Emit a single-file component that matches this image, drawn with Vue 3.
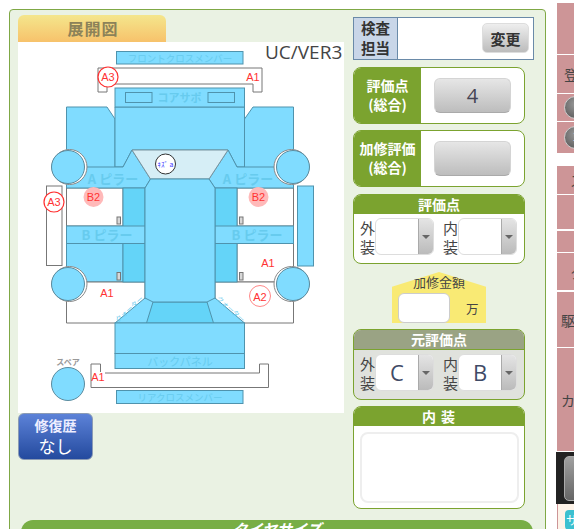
<script setup>
const pink = [
  { h: 51, cls: '', t: '' },
  { h: 38, cls: 'mid', t: '登録' },
  { h: 27, cls: 'radio', t: '' },
  { h: 31, cls: 'radio', t: '車' },
  { h: 28, cls: 'far gap', t: 'ス' },
  { h: 34, cls: '', t: '' },
  { h: 21, cls: 'gap2', t: '' },
  { h: 37, cls: 'far', t: 'ク' },
  { h: 55, cls: 'near gap2', t: '駆動' },
  { h: 103, cls: 'near', t: 'カラー' }
]
const outerInner = [
  { a: '外', b: '装' },
  { a: '内', b: '装' }
]
const original = ['C', 'B']
</script>

<template>
  <div class="page">
    <section class="panel">
      <div class="main">
        <div class="left">
          <div class="tab">展開図</div>
          <div class="sheet">
            <svg class="diagram" width="326" height="371" viewBox="18 42 326 371">
              <!-- front cross member and bumper -->
              <rect class="part" x="116.5" y="51.5" width="126.5" height="12.5" />
              <text class="ghost" x="180" y="61.5" text-anchor="middle" font-size="9.5">フロントクロスメンバー</text>
              <path class="bumper" d="M98 68H262V92H253V84H107V92H98Z" />

              <!-- fenders and hood -->
              <path class="part" d="M66.5 107H107L115 119V170H66.5Z" />
              <path class="part" d="M293.5 107H253L244.5 119V170H293.5Z" />
              <path class="part" d="M115 107H244.5V167H237L228 150H132L123 167H115Z" />
              <rect class="part" x="115" y="88" width="129.5" height="19" />
              <rect class="part" x="125.5" y="92.5" width="26.5" height="10" />
              <rect class="part" x="208" y="92.5" width="26.5" height="10" />
              <text class="ghost" x="179.5" y="102" text-anchor="middle" font-size="11" font-weight="700">コアサポ</text>

              <!-- door openings -->
              <rect class="open" x="66.5" y="188" width="56.5" height="38" />
              <rect class="open" x="237" y="188" width="56.5" height="38" />
              <rect class="part" x="66.5" y="243" width="56.5" height="39" />
              <rect class="open" x="237" y="243" width="56.5" height="39" />

              <!-- rear white frame -->
              <path class="open" d="M66.5 282H145V323H66.5Z" />
              <path class="open" d="M293.5 282H215V323H293.5Z" />

              <!-- side sills -->
              <rect class="open" x="46.5" y="186" width="15.5" height="79.5" />
              <rect class="part" x="297.5" y="186" width="16" height="80" />

              <!-- a pillars -->
              <path class="part" d="M66.5 167H123L132 150L150.5 179L145 188H66.5Z" />
              <path class="part" d="M293.5 167H237L228 150L209 179L215 188H293.5Z" />
              <text class="ghost" x="113" y="184" text-anchor="middle" font-size="13" font-weight="700">A ピラー</text>
              <text class="ghost" x="248" y="184" text-anchor="middle" font-size="13" font-weight="700">A ピラー</text>
              <path class="glass" d="M132 150H228L209 179H150.5Z" />

              <!-- body -->
              <rect class="dark" x="123" y="188" width="22" height="94" />
              <rect class="dark" x="215" y="188" width="22" height="94" />
              <rect class="part" x="66.5" y="226" width="78.5" height="17.5" />
              <rect class="part" x="215" y="226" width="78.5" height="17.5" />
              <text class="ghost" x="107" y="240" text-anchor="middle" font-size="13" font-weight="700">B ピラー</text>
              <text class="ghost" x="257" y="240" text-anchor="middle" font-size="13" font-weight="700">B ピラー</text>
              <rect class="mark" x="117" y="217" width="3.5" height="7" />
              <rect class="mark" x="117" y="272.5" width="3.5" height="7.5" />
              <rect class="mark" x="239.5" y="217" width="3.5" height="7" />
              <rect class="mark" x="239.5" y="272.5" width="3.5" height="7.5" />

              <!-- rear section -->
              <path class="part" d="M145 298L115 323H244.5L215 298Z" />
              <path class="dark" d="M153 302L146.5 323H213.5L207 302Z" />
              <text class="ghost" font-size="7" text-anchor="middle" transform="translate(131 311) rotate(-42)">クォーター</text>
              <text class="ghost" font-size="7" text-anchor="middle" transform="translate(229 311) rotate(42)">クォーター</text>
              <path class="part" d="M150.5 179H209L215 188V298L207 302H153L145 298V188Z" />
              <rect class="part" x="115" y="323" width="129.5" height="30.5" />
              <rect class="part" x="115" y="353.5" width="129.5" height="15" />
              <text class="ghost" x="180" y="366" text-anchor="middle" font-size="11">バックパネル</text>

              <!-- rear bumper and cross member -->
              <path class="bumper" d="M91 364H100.5V373H259.5V364H268.5V387.5H91Z" />
              <rect class="part" x="116.5" y="390.5" width="126.5" height="13" />
              <text class="ghost" x="180" y="401" text-anchor="middle" font-size="9.5">リアクロスメンバー</text>

              <!-- wheels -->
              <circle class="ring" cx="69.5" cy="167" r="17.5" />
              <circle class="ring" cx="291.5" cy="167" r="17.5" />
              <circle class="ring" cx="69.5" cy="284" r="17.5" />
              <circle class="ring" cx="291.5" cy="284" r="17.5" />
              <circle class="wheel" cx="68" cy="167" r="16.5" />
              <circle class="wheel" cx="293" cy="167" r="16.5" />
              <circle class="wheel" cx="68" cy="284" r="16.5" />
              <circle class="wheel" cx="293" cy="284" r="16.5" />
              <circle class="wheel" cx="68" cy="384" r="16.5" />
              <text class="spare" x="68" y="365" text-anchor="middle" font-size="8" font-weight="700">スペア</text>

              <!-- damage marks -->
              <rect x="246" y="69" width="15" height="14" fill="#fff" />
              <rect x="92" y="372" width="13" height="14" fill="#fff" />
              <circle class="pinkdot" cx="93.5" cy="197" r="10" />
              <circle class="pinkdot" cx="258.5" cy="197" r="10" />
              <circle class="redring" cx="108" cy="77" r="10" />
              <circle class="redring" cx="54" cy="202" r="10" />
              <circle class="thinring" cx="260" cy="296" r="10.5" />
              <circle class="scratch" cx="165.5" cy="164" r="10" />
              <text class="red" x="108" y="81" text-anchor="middle">A3</text>
              <text class="red" x="253" y="81" text-anchor="middle">A1</text>
              <text class="red" x="54" y="206" text-anchor="middle">A3</text>
              <text class="red" x="93.5" y="201" text-anchor="middle">B2</text>
              <text class="red" x="258.5" y="201" text-anchor="middle">B2</text>
              <text class="red" x="268" y="267" text-anchor="middle">A1</text>
              <text class="red" x="107" y="297" text-anchor="middle">A1</text>
              <text class="red" x="260" y="301" text-anchor="middle">A2</text>
              <text class="red" x="98" y="381" text-anchor="middle">A1</text>
              <text class="blue" x="165.5" y="167" text-anchor="middle">ｷｽﾞ a</text>
              <text class="version" x="265" y="59">UC/VER3</text>
            </svg>
          </div>
          <button class="history">
            <span class="history-title">修復歴</span>
            <span class="history-value">なし</span>
          </button>
        </div>

        <div class="right">
          <div class="inspect">
            <div class="inspect-label">検査<br />担当</div>
            <div class="inspect-body"><button class="change">変更</button></div>
          </div>

          <div class="score">
            <div class="score-label">評価点<br />(総合)</div>
            <div class="score-body"><div class="score-btn">4</div></div>
          </div>
          <div class="score second">
            <div class="score-label">加修評価<br />(総合)</div>
            <div class="score-body"><div class="score-btn"></div></div>
          </div>

          <div class="group rating">
            <div class="group-head">評価点</div>
            <div class="selects">
              <div v-for="item in outerInner" :key="item.a" class="pair">
                <div class="pair-label">{{ item.a }}<br />{{ item.b }}</div>
                <div class="select">
                  <div class="select-value"></div>
                  <div class="select-arrow"><i></i></div>
                </div>
              </div>
            </div>
          </div>

          <div class="amount">
            <div class="amount-label">加修金額</div>
            <div class="amount-row">
              <div class="amount-input"></div>
              <span class="amount-unit">万</span>
            </div>
          </div>

          <div class="group origin">
            <div class="group-head">元評価点</div>
            <div class="selects">
              <div v-for="(item, i) in outerInner" :key="item.a" class="pair">
                <div class="pair-label">{{ item.a }}<br />{{ item.b }}</div>
                <div class="select">
                  <div class="select-value">{{ original[i] }}</div>
                  <div class="select-arrow"><i></i></div>
                </div>
              </div>
            </div>
          </div>

          <div class="group interior">
            <div class="group-head spaced">内 装</div>
            <div class="interior-body"><div class="memo"></div></div>
          </div>
        </div>
      </div>
      <div class="tire">タイヤサイズ</div>
    </section>

    <aside class="side">
      <div
        v-for="(row, i) in pink"
        :key="i"
        class="pink"
        :class="row.cls"
        :style="{ height: row.h + 'px' }"
      >
        <span v-if="row.cls.includes('radio')" class="dot">{{ row.t }}</span>
        <template v-else>{{ row.t }}</template>
      </div>
      <div class="black"><div class="black-btn"></div></div>
      <div class="cream"><div class="teal">サ</div></div>
    </aside>
  </div>
</template>

<style>
html, body { margin: 0; background: #fff; }
</style>

<style scoped>
.page {
  display: flex;
  width: 574px;
  height: 529px;
  overflow: hidden;
  background: #fff;
  font-family: "Noto Sans CJK JP", "Open Sans", sans-serif;
  color: #444;
}
.panel {
  box-sizing: border-box;
  flex: none;
  width: 537px;
  height: 540px;
  margin: 9px 0 0 9px;
  padding: 5px 0 0 8px;
  border: 1px solid #7fa845;
  border-radius: 4px;
  background: #eaf2e3;
}
.main { display: flex; height: 505px; }
.left { flex: none; width: 326px; }
.tab {
  box-sizing: border-box;
  width: 148px;
  height: 27px;
  padding-left: 2px;
  border-radius: 6px 6px 0 0;
  background: linear-gradient(#f4e68c, #f7c26b);
  color: #8c8259;
  font-size: 16px;
  font-weight: 700;
  line-height: 27px;
  letter-spacing: 1px;
  text-align: center;
}
.sheet { height: 371px; background: #fff; }
.diagram { display: block; font-family: "Noto Sans CJK JP", "Open Sans", sans-serif; }
.part { fill: #80dcff; stroke: #4f93ad; stroke-width: 1; }
.dark { fill: #64d4f8; stroke: #4f93ad; stroke-width: 1; }
.open { fill: #fff; stroke: #777; stroke-width: 1; }
.bumper { fill: #fff; stroke: #777; stroke-width: 1; }
.glass { fill: #d6eef6; stroke: #79949f; stroke-width: 1; }
.mark { fill: #d8d8d8; stroke: #777; stroke-width: 1; }
.ring { fill: #fff; stroke: #888; stroke-width: 1; }
.wheel { fill: #80dcff; stroke: #5b8b9e; stroke-width: 1; }
.ghost { fill: #67cbee; }
.spare { fill: #999; }
.pinkdot { fill: #ffb9b9; }
.redring { fill: #fff; stroke: #ff3030; stroke-width: 1.2; }
.thinring { fill: #fff; stroke: #ff6a6a; stroke-width: 0.8; }
.scratch { fill: #fff; stroke: #333; stroke-width: 1; }
.red { fill: #ff3333; font-size: 11px; font-family: "Liberation Sans", sans-serif; }
.blue { fill: #3a3aff; font-size: 7px; }
.version { fill: #444; font-size: 19px; font-family: "Open Sans", sans-serif; }
.history {
  display: flex;
  flex-direction: column;
  align-items: center;
  box-sizing: border-box;
  width: 75px;
  height: 47px;
  margin: 0;
  padding: 1px 0 0;
  border: 1px solid #8b9bb5;
  border-radius: 6px;
  background: linear-gradient(#5c82d8, #244a9e);
  color: #fff;
  font-family: inherit;
}
.history-title { font-size: 14px; font-weight: 700; line-height: 20px; color: #eef; }
.history-value { font-size: 17px; line-height: 22px; }
.right { flex: none; width: 181px; margin-left: 9px; padding-top: 2px; }
.inspect {
  box-sizing: border-box;
  display: flex;
  width: 181px;
  height: 43px;
  border: 1px solid #6a8aa8;
  background: #fff;
}
.inspect-label {
  box-sizing: border-box;
  width: 44px;
  border-right: 1px solid #6a8aa8;
  background: #c9d6e8;
  color: #333;
  font-size: 14.5px;
  font-weight: 700;
  line-height: 20px;
  text-align: center;
}
.inspect-body { flex: 1; display: flex; justify-content: flex-end; padding: 5px 4px 0 0; }
.change {
  box-sizing: border-box;
  width: 47px;
  height: 30px;
  padding: 0;
  border: 1px solid #ddd;
  border-radius: 5px;
  background: linear-gradient(#eee, #bcbcbc);
  color: #333;
  font-family: inherit;
  font-size: 15px;
  font-weight: 700;
}
.score {
  box-sizing: border-box;
  display: flex;
  width: 172px;
  height: 57px;
  margin-top: 7px;
  overflow: hidden;
  border: 1px solid #7ba32f;
  border-radius: 8px;
  background: #fff;
}
.score.second { margin-top: 6px; }
.score-label {
  flex: none;
  width: 67px;
  padding-top: 8px;
  box-sizing: border-box;
  background: #7ba32f;
  color: #fff;
  font-size: 14px;
  font-weight: 700;
  line-height: 19px;
  text-align: center;
  white-space: nowrap;
}
.score-body { flex: 1; padding: 10px 0 0 13px; }
.score-btn {
  box-sizing: border-box;
  width: 77px;
  height: 35px;
  border: 1px solid #d4d4d4;
  border-bottom-color: #aaa;
  border-radius: 6px;
  background: linear-gradient(#e6e6e6, #bdbdbd);
  color: #445;
  font-family: "Open Sans", sans-serif;
  font-size: 20px;
  line-height: 33px;
  text-align: center;
}
.group {
  box-sizing: border-box;
  width: 172px;
  overflow: hidden;
  border: 1px solid #7ba32f;
  border-radius: 8px;
  background: #fff;
}
.rating { height: 70px; margin-top: 7px; }
.origin { height: 71px; margin-top: 6px; background: #e0e2dd; }
.interior { height: 103px; margin-top: 6px; }
.group-head {
  height: 19px;
  background: #7ba32f;
  color: #fff;
  font-size: 14px;
  font-weight: 700;
  line-height: 18px;
  text-align: center;
}
.spaced { letter-spacing: 1px; }
.origin .group-head { background: #9aa384; border-bottom: 1px solid #7ba32f; }
.selects { display: flex; gap: 9px; padding: 4px 0 0 6px; }
.pair { display: flex; }
.pair-label { width: 15px; font-size: 15px; line-height: 19px; color: #444; }
.select {
  box-sizing: border-box;
  display: flex;
  width: 59px;
  height: 37px;
  overflow: hidden;
  border: 1px solid #ddd;
  border-radius: 6px;
  background: #fff;
}
.select-value {
  flex: 1;
  color: #3f4a66;
  font-family: "Open Sans", sans-serif;
  font-size: 22px;
  line-height: 35px;
  text-align: center;
}
.select-arrow {
  display: flex;
  align-items: center;
  justify-content: center;
  flex: none;
  width: 14px;
  border-left: 1px solid #aaa;
  background: linear-gradient(#e4e4e4, #bbb);
}
.select-arrow i {
  width: 0;
  height: 0;
  border-top: 4px solid #666;
  border-left: 4px solid transparent;
  border-right: 4px solid transparent;
}
.amount {
  box-sizing: border-box;
  width: 94px;
  height: 51px;
  margin: 8px 0 0 39px;
  padding-top: 1px;
  background: #f9ea74;
  clip-path: polygon(50% 0, 100% 29%, 100% 100%, 0 100%, 0 29%);
}
.amount-label { font-size: 13px; line-height: 18px; text-align: center; }
.amount-row { display: flex; align-items: center; padding: 2px 0 0 6px; }
.amount-input {
  box-sizing: border-box;
  width: 52px;
  height: 30px;
  border: 1px solid #ccc;
  border-radius: 6px;
  background: #fff;
}
.amount-unit { margin-left: 16px; font-size: 12.5px; }
.interior-body { padding: 6px 0 0 6px; }
.memo {
  box-sizing: border-box;
  width: 159px;
  height: 71px;
  border: 2px solid #eee;
  border-radius: 8px;
  background: #fff;
}
.tire {
  width: 512px;
  height: 30px;
  margin-left: 3px;
  border-radius: 12px 12px 0 0;
  background: #78ae45;
  color: #fff;
  font-size: 15px;
  font-style: italic;
  font-weight: 700;
  line-height: 18px;
  text-align: center;
}
.side { flex: none; width: 17px; margin: 3px 0 0 11px; }
.pink {
  box-sizing: border-box;
  width: 17px;
  margin-bottom: 1px;
  overflow: hidden;
  background: #cd9597;
  color: #444;
  font-size: 14px;
  white-space: nowrap;
  display: flex;
  align-items: center;
}
.pink.mid { padding-left: 7px; }
.pink.far { padding-left: 13px; }
.pink.near { padding-left: 4px; }
.pink.gap { margin-top: 13px; }
.pink.gap2 { margin-top: 2px; }
.dot {
  flex: none;
  box-sizing: border-box;
  width: 23px;
  height: 23px;
  margin-left: 7px;
  padding-left: 8px;
  border: 1px solid #ccc;
  border-radius: 50%;
  background: radial-gradient(circle at 50% 35%, #999, #555);
  color: #fff;
  font-size: 11px;
  line-height: 20px;
}
.black {
  box-sizing: border-box;
  width: 18px;
  height: 52px;
  margin-left: -1px;
  padding: 4px 0 0 8px;
  background: #222;
  overflow: hidden;
}
.black-btn {
  width: 20px;
  height: 43px;
  border: 1px solid #aaa;
  border-radius: 5px;
  background: linear-gradient(#a0a0a0, #666);
}
.cream {
  box-sizing: border-box;
  height: 30px;
  padding: 6px 0 0 7px;
  border-left: 1px solid #cd9597;
  background: #fdf3e8;
}
.teal {
  width: 20px;
  height: 20px;
  border-radius: 4px;
  background: #3cc0d0;
  color: #fff;
  font-size: 12px;
  line-height: 20px;
  padding-left: 1px;
}
</style>
